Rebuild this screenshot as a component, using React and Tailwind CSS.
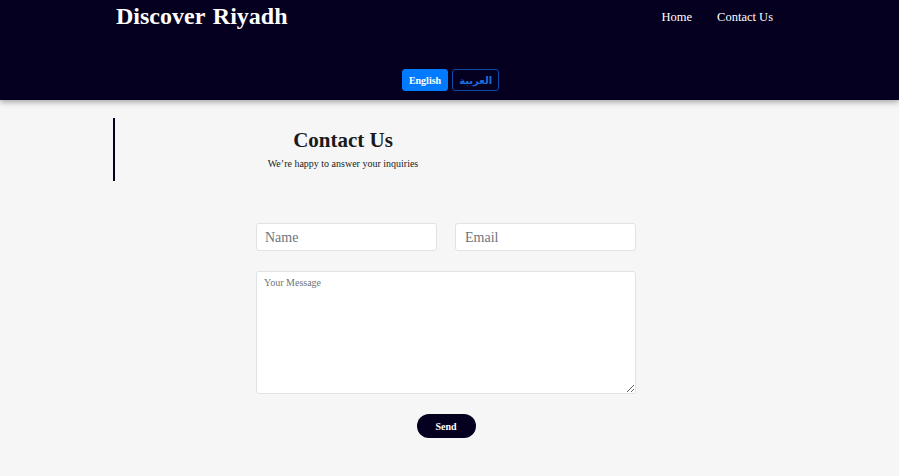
import React, { useState } from 'react';

const App = () => {
    const [lang, setLang] = useState('en');

    return (
        <div className="min-h-[476px] bg-[#f6f6f6] font-['Liberation_Serif',serif]">
            <header className="h-[100px] bg-[#05001f] shadow-[0_2px_6px_rgba(0,0,0,0.35)] relative">
                <div className="flex justify-between items-start pl-[116px] pr-[126px]">
                    <h1 className="text-[24px] leading-[32px] font-bold text-white [word-spacing:2px]">Discover Riyadh</h1>
                    <nav className="flex gap-[25px] pt-[8px] text-[12.5px] text-white">
                        <a href="#">Home</a>
                        <a href="#">Contact Us</a>
                    </nav>
                </div>
                <div className="flex justify-center gap-[4px] mt-[37px] pl-[2px]">
                    <button
                        onClick={() => setLang('en')}
                        className="h-[22px] px-[6px] rounded-[3px] bg-[#007bff] border border-[#007bff] text-white text-[10px] font-bold"
                    >
                        English
                    </button>
                    <button
                        onClick={() => setLang('ar')}
                        className="h-[22px] px-[6px] rounded-[3px] border border-[#0b4aa8] text-[#1a6fe0] text-[10px] font-semibold font-['DejaVu_Sans',sans-serif]"
                    >
                        العربية
                    </button>
                </div>
            </header>

            <main className="pt-[18px]">
                <div className="ml-[113px] w-[458px] h-[63px] border-l-2 border-[#05001f] flex flex-col items-center pt-[10px]">
                    <h2 className="text-[21px] leading-[24px] font-bold text-[#1a1a1a]">Contact Us</h2>
                    <p className="text-[10px] leading-[12px] mt-[6px] text-[#222]">We’re happy to answer your inquiries</p>
                </div>

                <form className="w-[380px] ml-[256px] mt-[42px]" onSubmit={(e) => e.preventDefault()}>
                    <div className="flex gap-[18px]">
                        <input
                            type="text"
                            placeholder="Name"
                            className="w-[181px] h-[28px] px-[8px] pt-[1px] bg-white border border-[#dfe3e6] rounded-[3px] text-[14px] placeholder-[#6c757d] outline-none"
                        />
                        <input
                            type="email"
                            placeholder="Email"
                            className="w-[181px] h-[28px] px-[9px] pt-[1px] bg-white border border-[#dfe3e6] rounded-[3px] text-[14px] placeholder-[#6c757d] outline-none"
                        />
                    </div>
                    <textarea
                        placeholder="Your Message"
                        className="block w-[380px] h-[123px] mt-[20px] px-[7px] py-[3px] bg-white border border-[#dfe3e6] rounded-[3px] text-[10px] placeholder-[#6c757d] outline-none"
                    />
                    <div className="flex justify-center mt-[20px]">
                        <button
                            type="submit"
                            className="w-[59px] h-[24px] rounded-full bg-[#05001f] text-white text-[10px] font-bold"
                        >
                            Send
                        </button>
                    </div>
                </form>
            </main>
        </div>
    );
};

export default App;
